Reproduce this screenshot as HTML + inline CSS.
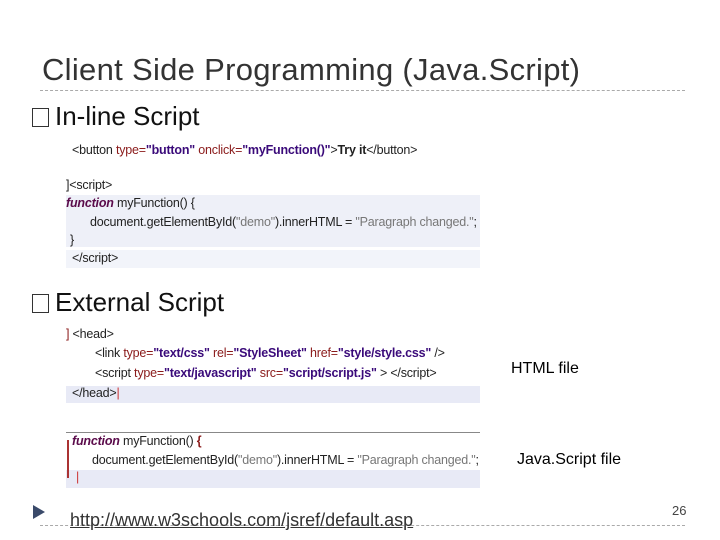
<html><body style="margin:0;width:720px;height:540px;background:#fff;position:relative;overflow:hidden;font-family:'Liberation Sans',sans-serif">
<style>
.a{position:absolute;white-space:nowrap}
.c{font-size:12.5px;color:#222;letter-spacing:-0.2px}
.r{color:#8a1a1a}.p{color:#3a0a7a;font-weight:bold}.g{color:#777}.k{color:#5a0a4a;font-weight:bold;font-style:italic}
.dash{position:absolute;left:40px;width:645px;border-top:1px dashed #aaa}
.bx{display:inline-block;width:15px;height:17px;border:1px solid #333;margin-right:6px;vertical-align:-2px}
</style>
<div class="a" style="left:42px;top:52px;font-size:31px;color:#333;letter-spacing:0.3px">Client Side Programming (Java.Script)</div>
<div class="dash" style="top:90px"></div>
<div class="a" style="left:32px;top:101px;font-size:26px;color:#111"><span class="bx"></span>In-line Script</div>
<div class="a" style="left:32px;top:287px;font-size:26px;color:#111"><span class="bx"></span>External Script</div>
<div class="a" style="left:66px;top:195px;width:414px;height:52px;background:#eef0f8"></div>
<div class="a" style="left:66px;top:250px;width:414px;height:18px;background:#f2f4fa"></div>
<div class="a c" style="left:72px;top:143px"><span>&lt;button </span><span class="r">type=</span><span class="p">"button"</span> <span class="r">onclick=</span><span class="p">"myFunction()"</span>&gt;<b>Try it</b>&lt;/button&gt;</div>
<div class="a c" style="left:66px;top:178px">]&lt;script&gt;</div>
<div class="a c" style="left:66px;top:196px"><span class="k">function</span> myFunction() {</div>
<div class="a c" style="left:90px;top:215px">document.getElementById(<span class="g">"demo"</span>).innerHTML = <span class="g">"Paragraph changed."</span>;</div>
<div class="a c" style="left:70px;top:233px">}</div>
<div class="a c" style="left:72px;top:251px">&lt;/script&gt;</div>
<div class="a" style="left:66px;top:386px;width:414px;height:17px;background:#e8eaf6"></div>
<div class="a c" style="left:66px;top:327px"><span class="r">]</span> &lt;head&gt;</div>
<div class="a c" style="left:95px;top:346px">&lt;link <span class="r">type=</span><span class="p">"text/css"</span> <span class="r">rel=</span><span class="p">"StyleSheet"</span> <span class="r">href=</span><span class="p">"style/style.css"</span> /&gt;</div>
<div class="a c" style="left:95px;top:366px">&lt;script <span class="r">type=</span><span class="p">"text/javascript"</span> <span class="r">src=</span><span class="p">"script/script.js"</span> &gt; &lt;/script&gt;</div>
<div class="a c" style="left:72px;top:386px">&lt;/head&gt;<span style="color:#c33">|</span></div>
<div class="a" style="left:66px;top:432px;width:414px;border-top:1px solid #888"></div>
<div class="a" style="left:66px;top:470px;width:414px;height:18px;background:#e8eaf6"></div>
<div class="a" style="left:67px;top:440px;width:2px;height:38px;background:#a33"></div>
<div class="a c" style="left:72px;top:434px"><span class="k">function</span> myFunction() <span class="r" style="font-weight:bold">{</span></div>
<div class="a c" style="left:92px;top:453px">document.getElementById(<span class="g">"demo"</span>).innerHTML = <span class="g">"Paragraph changed."</span>;</div>
<div class="a c" style="left:76px;top:470px;color:#c33">|</div>
<div class="a" style="left:511px;top:360px;font-size:16px;color:#000">HTML file</div>
<div class="a" style="left:517px;top:451px;font-size:16px;color:#000">Java.Script file</div>
<div class="dash" style="top:525px"></div>
<svg class="a" style="left:33px;top:505px" width="12" height="14"><polygon points="0,0 12,7 0,14" fill="#3a4a6a"/></svg>
<div class="a" style="left:70px;top:510px;font-size:18px;color:#333;text-decoration:underline">http://www.w3schools.com/jsref/default.asp</div>
<div class="a" style="left:672px;top:503px;font-size:13px;color:#444">26</div>
</body></html>
